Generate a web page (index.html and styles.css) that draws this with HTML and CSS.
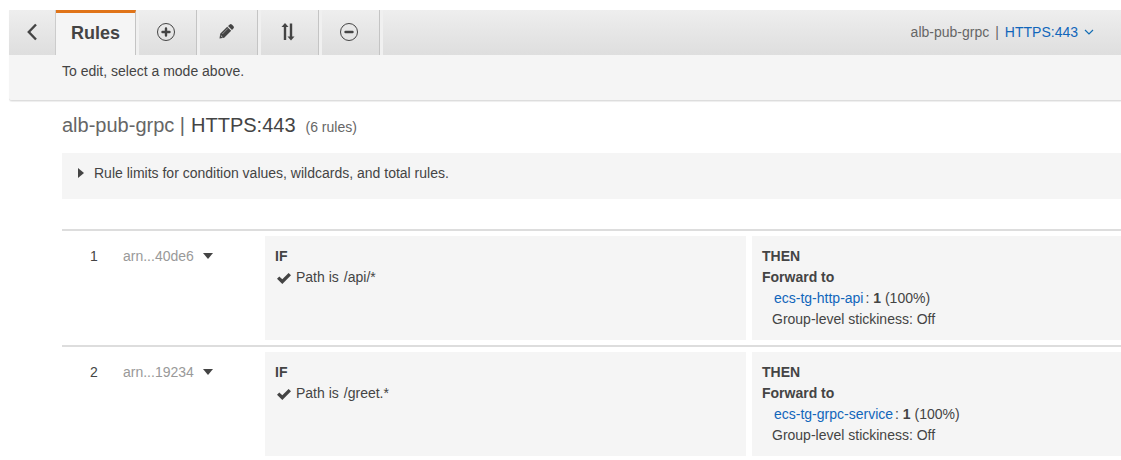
FILE: index.html
```
<!DOCTYPE html>
<html lang="en">
<head>
<meta charset="utf-8">
<meta name="viewport" content="width=device-width, initial-scale=1">
<title>Listener rules</title>
<link rel="stylesheet" href="styles.css">
</head>
<body>
<header class="banner">
  <nav class="toolbar" aria-label="Rule modes">
    <button class="back" type="button" aria-label="Back"><svg width="10" height="18" viewBox="0 0 10 18"><path d="M9 1.500 1.800 9 9 16.500" fill="none" stroke="#444" stroke-width="2.400"/></svg></button>
    <button class="tab" type="button" aria-current="page">Rules</button>
    <button class="mode" type="button" aria-label="Add rules"><svg width="20" height="20" viewBox="0 0 20 20"><circle cx="10" cy="10" r="8.500" fill="none" stroke="#444"/><path d="M6.500 10h7M10 6.500v7" stroke="#444" stroke-width="2.400" stroke-linecap="round"/></svg></button>
    <button class="mode" type="button" aria-label="Edit rules"><svg width="20" height="20" viewBox="0 0 20 20"><path d="M2.500 16.500 3.200 11.800l7-7 4 4-7 7zM11 4l1.800-1.600q1-.7 2 .2l1.700 1.700q.9 1 .1 1.900L15 8z" fill="#444"/><path d="m5.300 12 5.600-5.600" stroke="#aaa" stroke-width=".8"/><path d="m3.800 13.500 1.700 1.700" stroke="#ccc"/></svg></button>
    <button class="mode" type="button" aria-label="Reorder rules"><svg width="20" height="20" viewBox="0 0 20 20"><path d="M7 18V4M13 1.500V15" stroke="#444" stroke-width="2.400"/><path d="M3.500 5 7 1l3.500 4zM9.500 14.500l3.500 4 3.500-4z" fill="#444"/></svg></button>
    <button class="mode" type="button" aria-label="Delete rules"><svg width="20" height="20" viewBox="0 0 20 20"><circle cx="10" cy="10" r="8.500" fill="none" stroke="#444"/><path d="M6.500 10h7" stroke="#444" stroke-width="2.400" stroke-linecap="round"/></svg></button>
    <div class="listener">
      <span>alb-pub-grpc</span><span>|</span>
      <button class="picker" type="button">HTTPS:443<svg width="10" height="8" viewBox="0 0 10 8"><path d="m1 1 4 4 4-4" fill="none" stroke="#146eb4" stroke-width="1.200"/></svg></button>
    </div>
  </nav>
  <p class="hint">To edit, select a mode above.</p>
</header>
<main class="content">
  <h1 class="title"><span>alb-pub-grpc |</span><span class="port">HTTPS:443</span><small class="count">(6 rules)</small></h1>
  <details class="limits">
    <summary class="limits-label"><svg width="6" height="12" viewBox="0 0 6 12"><path d="M0 0 6 5 0 10z" fill="#444"/></svg>Rule limits for condition values, wildcards, and total rules.</summary>
  </details>
  <ol class="rules">
    <li class="rule">
      <span class="number">1</span>
      <button class="arn" type="button">arn...40de6<svg width="10" height="8" viewBox="0 0 10 8"><path d="M0 0h10L5 6z" fill="#444"/></svg></button>
      <section class="panel">
        <h2 class="label">IF</h2>
        <p class="condition"><svg width="14" height="12" viewBox="0 0 14 12"><path d="M0 6.800 2.300 4.500 5.300 7.300 11.600 1 14 3.300 5.300 12z" fill="#444"/></svg><span>Path is</span><span>/api/*</span></p>
      </section>
      <section class="panel">
        <h2 class="label">THEN</h2>
        <h3 class="label">Forward to</h3>
        <p class="target"><a class="link" href="#ecs-tg-http-api">ecs-tg-http-api</a><span>: <b>1</b> (100%)</span></p>
        <p class="sticky">Group-level stickiness: Off</p>
      </section>
    </li>
    <li class="rule">
      <span class="number">2</span>
      <button class="arn" type="button">arn...19234<svg width="10" height="8" viewBox="0 0 10 8"><path d="M0 0h10L5 6z" fill="#444"/></svg></button>
      <section class="panel">
        <h2 class="label">IF</h2>
        <p class="condition"><svg width="14" height="12" viewBox="0 0 14 12"><path d="M0 6.800 2.300 4.500 5.300 7.300 11.600 1 14 3.300 5.300 12z" fill="#444"/></svg><span>Path is</span><span>/greet.*</span></p>
      </section>
      <section class="panel">
        <h2 class="label">THEN</h2>
        <h3 class="label">Forward to</h3>
        <p class="target"><a class="link" href="#ecs-tg-grpc-service">ecs-tg-grpc-service</a><span>: <b>1</b> (100%)</span></p>
        <p class="sticky">Group-level stickiness: Off</p>
      </section>
    </li>
  </ol>
</main>
</body>
</html>
```

FILE: styles.css
```
* {
  box-sizing: border-box;
}

body {
  margin: 0;
  padding: 10px 0 0 9px;
  background: #fff;
  color: #444;
  font: 14px/21px "Liberation Sans", Arial, sans-serif;
}

h1, h2, h3, p, ol {
  margin: 0;
  padding: 0;
}

button {
  padding: 0;
  border: 0;
  background: none;
  color: inherit;
  font: inherit;
  cursor: pointer;
}

svg {
  flex: none;
}

.banner {
  background: #f5f5f5;
  border-bottom: 1px solid #ddd;
  border-radius: 0 0 0 3px;
  box-shadow: 0 1px 1px #eee;
}

.toolbar {
  display: flex;
  height: 45px;
  background: linear-gradient(#eee, #dedede);
}

.back,
.mode {
  display: flex;
  align-items: center;
  justify-content: center;
  padding-bottom: 1px;
}

.back {
  width: 47px;
  border-right: 1px solid #ccc;
}

.tab {
  padding: 0 15px 2px;
  border-top: 3px solid #e07419;
  background: #f5f5f5;
  font-size: 18px;
  font-weight: bold;
}

.tab,
.mode {
  border-right: 1px solid #c4c4c4;
  box-shadow: 3px 0 #f0f0f0;
}

.mode {
  width: 58px;
  margin-left: 3px;
  padding-right: 3px;
}

.listener {
  display: flex;
  align-items: center;
  gap: 6px;
  margin-left: auto;
  padding-right: 27px;
  color: #666;
}

.picker {
  display: flex;
  align-items: center;
  gap: 6px;
  color: #1166bb;
}

.hint {
  padding: 6px 0 18px 53px;
}

.content {
  padding: 12px 0 4px 53px;
}

.title {
  display: flex;
  align-items: baseline;
  gap: 6px;
  color: #666;
  font-size: 20px;
  font-weight: normal;
  line-height: 24px;
}

.port {
  color: #444;
}

.count {
  margin-left: 4px;
  font-size: 14px;
  line-height: 21px;
}

.limits {
  margin: 15px 0 30px;
  padding: 10px 16px 15px;
  background: #f5f5f5;
}

.limits-label {
  display: flex;
  align-items: center;
  gap: 10px;
  list-style: none;
  cursor: pointer;
}

.rules {
  list-style: none;
}

.rule {
  display: grid;
  grid-template-columns: 55px 136px 481fr 369fr;
  column-gap: 6px;
  padding: 5px 0;
  border-top: 2px solid #ddd;
}

.number {
  padding: 10px 0 0 28px;
}

.arn {
  display: flex;
  align-items: center;
  align-self: start;
  gap: 9px;
  padding-top: 10px;
  color: #999;
}

.panel {
  padding: 10px;
  background: #f5f5f5;
}

.label {
  font-size: 14px;
  line-height: 21px;
}

.condition {
  display: flex;
  align-items: center;
  gap: 5px;
  padding-left: 2px;
}

.target {
  display: flex;
  gap: 2px;
  padding-left: 12px;
}

.sticky {
  padding-left: 10px;
}

.link {
  color: #1166bb;
  text-decoration: none;
}
```
